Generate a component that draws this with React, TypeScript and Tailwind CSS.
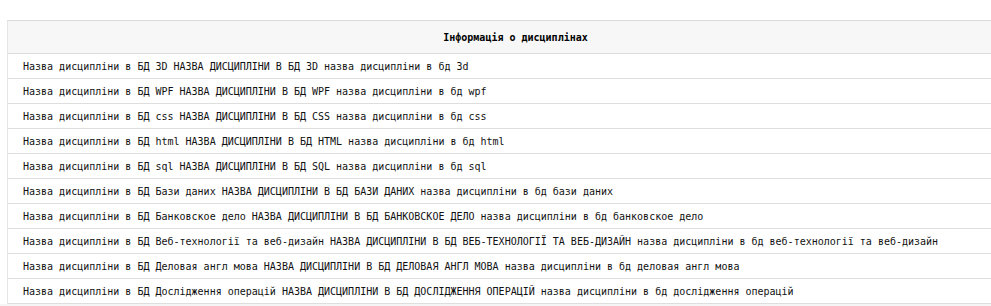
const items: [string, string][] = [
  ['3D', '3d'],
  ['WPF', 'wpf'],
  ['css', 'css'],
  ['html', 'html'],
  ['sql', 'sql'],
  ['Бази даних', 'бази даних'],
  ['Банковское дело', 'банковское дело'],
  ['Веб-технології та веб-дизайн', 'веб-технології та веб-дизайн'],
  ['Деловая англ мова', 'деловая англ мова'],
  ['Дослідження операцій', 'дослідження операцій'],
];

function rowText(name: string, lower: string) {
  return `Назва дисципліни в БД ${name} ${`Назва дисципліни в БД ${name}`.toUpperCase()} назва дисципліни в бд ${lower}`;
}

export default function App() {
  return (
    <div className="h-[306px] w-[991px] overflow-hidden bg-white pt-[20px] pl-[7px] font-['DejaVu_Sans_Mono',monospace] text-[10px] text-[#111]">
      <table className="w-[1016px] border-collapse border-l border-[#e6e6e6]">
        <thead>
          <tr className="h-[33px] border-y border-[#dcdcdc] bg-[#f7f7f7]">
            <th className="font-bold text-center text-black">Інформація о дисциплінах</th>
          </tr>
        </thead>
        <tbody>
          {items.map(([name, lower]) => (
            <tr key={name} className="h-[25px] border-b border-[#dedede]">
              <td className="pl-[15px] whitespace-nowrap">{rowText(name, lower)}</td>
            </tr>
          ))}
        </tbody>
      </table>
      <div className="-ml-[7px] h-[10px] bg-[#f5f5f5]" />
    </div>
  );
}
